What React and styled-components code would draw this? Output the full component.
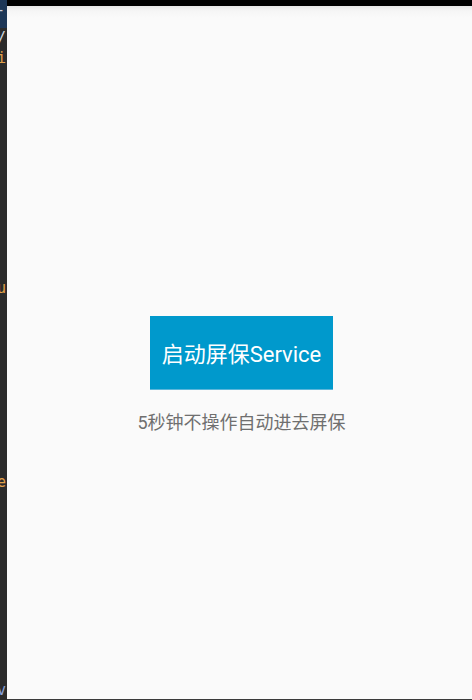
import React from "react";
import styled, { createGlobalStyle } from "styled-components";

const Global = createGlobalStyle`
  html, body { margin: 0; padding: 0; background: #fafafa; }
  body { font-family: Roboto, "Noto Sans CJK SC", sans-serif; }
`;

const Frame = styled.div`
  display: flex;
  width: 472px;
  height: 700px;
  overflow: hidden;
`;

const Gutter = styled.div`
  width: 7px;
  flex: none;
  display: flex;
  flex-direction: column;
  background: #2b2b2b;
  overflow: hidden;
  font-family: "DejaVu Sans Mono", monospace;
  font-size: 15px;
  line-height: 20px;
`;

const GutterHead = styled.div`
  height: 28px;
  background: #1d3757;
  flex: none;
  color: #c8d0da;
  white-space: nowrap;
  text-indent: -4px;
`;

const Glyph = styled.div`
  height: ${(p) => p.$h}px;
  flex: none;
  color: ${(p) => p.$c || "#e0a14a"};
  white-space: nowrap;
  text-indent: -3px;
  display: flex;
  align-items: flex-end;
`;

const Device = styled.div`
  flex: 1;
  display: flex;
  flex-direction: column;
`;

const StatusBar = styled.div`
  height: 6px;
  flex: none;
  background: #000;
`;

const Screen = styled.main`
  flex: 1;
  display: grid;
  grid-template-rows: 1fr auto 1fr;
  justify-items: center;
  background: linear-gradient(#e6e6e6 0px, #f6f6f6 5px, #fafafa 12px);
  padding-left: 4px;
`;

const Button = styled.button`
  grid-row: 2;
  height: 74px;
  padding: 0 12px;
  border: none;
  border-bottom: 1px solid #5cb6da;
  background: #0099cc;
  color: #fff;
  font-family: Roboto, "Noto Sans CJK SC", sans-serif;
  font-size: 22px;
  margin: 0;
  cursor: pointer;
`;

const Hint = styled.p`
  grid-row: 3;
  align-self: start;
  margin: 21px 0 0;
  color: #6f6f6f;
  font-family: Roboto, "Noto Sans CJK SC", sans-serif;
  font-size: 18px;
  line-height: 24px;
`;

const BottomLine = styled.div`
  height: 1px;
  flex: none;
  background: #3a3a3a;
`;

export default function App() {
  return (
    <>
      <Global />
      <Frame>
        <Gutter>
          <GutterHead>-</GutterHead>
          <Glyph $h={20} $c="#cfd6de">/</Glyph>
          <Glyph $h={20}>i</Glyph>
          <Glyph $h={230}>u</Glyph>
          <Glyph $h={194}>e</Glyph>
          <Glyph $h={208} $c="#8aa0d8">v</Glyph>
        </Gutter>
        <Device>
          <StatusBar />
          <Screen>
            <Button>启动屏保Service</Button>
            <Hint>5秒钟不操作自动进去屏保</Hint>
          </Screen>
          <BottomLine />
        </Device>
      </Frame>
    </>
  );
}
